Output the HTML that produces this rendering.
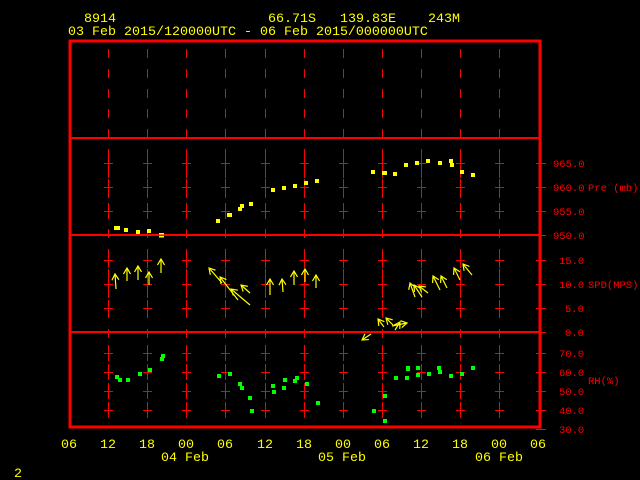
<!DOCTYPE html>
<html><head><meta charset="utf-8"><style>
html,body{margin:0;padding:0;background:#000;width:640px;height:480px;overflow:hidden}
svg{display:block}
text{font-family:"Liberation Mono",monospace}
</style></head><body>
<svg width="640" height="480" viewBox="0 0 640 480" xmlns="http://www.w3.org/2000/svg">
<defs>
<marker id="ah" markerWidth="8" markerHeight="8" refX="7" refY="4" orient="auto" markerUnits="userSpaceOnUse">
<path d="M1,0.5 L7,4 L1,7.5" fill="none" stroke="#ffff00" stroke-width="1.2"/>
</marker>
</defs>
<g fill="#ffff00" font-size="13.33">
<text x="84" y="22">8914</text>
<text x="268" y="22" xml:space="preserve">66.71S   139.83E    243M</text>
<text x="68" y="35">03 Feb 2015/120000UTC - 06 Feb 2015/000000UTC</text>
</g>
<g shape-rendering="crispEdges">
<rect x="70" y="41" width="470" height="386" fill="none" stroke="#ff0000" stroke-width="3"/>
<g stroke="#ff0000" stroke-width="2">
<line x1="71" y1="138" x2="539" y2="138"/>
<line x1="71" y1="235" x2="539" y2="235"/>
<line x1="71" y1="332" x2="539" y2="332"/>
</g>
<g stroke="#ff0000" stroke-width="1" stroke-dasharray="9,11">
<line x1="108.5" y1="49" x2="108.5" y2="426"/>
<line x1="147.5" y1="49" x2="147.5" y2="426"/>
<line x1="186.5" y1="49" x2="186.5" y2="426"/>
<line x1="225.5" y1="49" x2="225.5" y2="426"/>
<line x1="265.5" y1="49" x2="265.5" y2="426"/>
<line x1="304.5" y1="49" x2="304.5" y2="426"/>
<line x1="343.5" y1="49" x2="343.5" y2="426"/>
<line x1="382.5" y1="49" x2="382.5" y2="426"/>
<line x1="421.5" y1="49" x2="421.5" y2="426"/>
<line x1="460.5" y1="49" x2="460.5" y2="426"/>
<line x1="499.5" y1="49" x2="499.5" y2="426"/>
</g>
<g id="cr" stroke="#ff0000" stroke-width="1">
<path d="M104,163.5h9M104,187.5h9M104,211.5h9M104,260.5h9M104,284.5h9M104,308.5h9M104,353.5h9M104,372.5h9M104,391.5h9M104,410.5h9M108.5,155v16M108.5,179v16M108.5,203v16M108.5,252v16M108.5,276v16M108.5,300v16M108.5,345v16M108.5,364v16M108.5,383v16M108.5,402v16"/>
</g>
<use href="#cr" x="39"/><use href="#cr" x="78"/><use href="#cr" x="117"/><use href="#cr" x="157"/><use href="#cr" x="196"/><use href="#cr" x="235"/><use href="#cr" x="274"/><use href="#cr" x="313"/><use href="#cr" x="352"/><use href="#cr" x="391"/>
<g stroke="#ff0000" stroke-width="1">
<path d="M536,163.5h10M536,187.5h10M536,211.5h10M536,235.5h10M536,260.5h10M536,284.5h10M536,308.5h10M536,332.5h10M536,353.5h10M536,372.5h10M536,391.5h10M536,410.5h10M536,429.5h10"/>
</g>
</g>
<g fill="#ff0000" font-size="10.5">
<text x="553" y="167">965.0</text>
<text x="553" y="191">960.0</text><text x="588" y="191">Pre (mb)</text>
<text x="553" y="215">955.0</text>
<text x="553" y="239">950.0</text>
<text x="559" y="264">15.0</text>
<text x="559" y="288">10.0</text><text x="588" y="288">SPD(MPS)</text>
<text x="565" y="312">5.0</text>
<text x="565" y="336">0.0</text>
<text x="559" y="357">70.0</text>
<text x="559" y="376">60.0</text><text x="588" y="384">RH(%)</text>
<text x="559" y="395">50.0</text>
<text x="559" y="414">40.0</text>
<text x="559" y="433">30.0</text>
</g>
<g fill="#ffff00" font-size="13.33">
<text x="61" y="448">06</text><text x="100" y="448">12</text><text x="139" y="448">18</text><text x="178" y="448">00</text>
<text x="217" y="448">06</text><text x="257" y="448">12</text><text x="296" y="448">18</text><text x="335" y="448">00</text>
<text x="374" y="448">06</text><text x="413" y="448">12</text><text x="452" y="448">18</text><text x="491" y="448">00</text><text x="530" y="448">06</text>
<text x="161" y="461">04 Feb</text><text x="318" y="461">05 Feb</text><text x="475" y="461">06 Feb</text>
<text x="14" y="477">2</text>
</g>
<g fill="#ffff00">
<rect x="114" y="226" width="6" height="4"/><rect x="124" y="228" width="4" height="4"/><rect x="136" y="230" width="4" height="4"/><rect x="147" y="229" width="4" height="4"/>
<rect x="159" y="233" width="5" height="1.5"/><rect x="159" y="236" width="5" height="1.5"/>
<rect x="216" y="219" width="4" height="4"/><rect x="227" y="213" width="5" height="4"/><rect x="238" y="207" width="4" height="4"/><rect x="240" y="204" width="4" height="4"/><rect x="249" y="202" width="4" height="4"/>
<rect x="271" y="188" width="4" height="4"/><rect x="282" y="186" width="4" height="4"/><rect x="293" y="184" width="4" height="4"/><rect x="304" y="181" width="4" height="4"/><rect x="315" y="179" width="4" height="4"/>
<rect x="371" y="170" width="4" height="4"/><rect x="382" y="171" width="5" height="4"/><rect x="393" y="172" width="4" height="4"/><rect x="404" y="163" width="4" height="4"/><rect x="415" y="161" width="4" height="4"/><rect x="426" y="159" width="4" height="4"/><rect x="438" y="161" width="4" height="4"/><rect x="449" y="159" width="4" height="4"/><rect x="450" y="163" width="4" height="4"/><rect x="460" y="170" width="4" height="4"/><rect x="471" y="173" width="4" height="4"/>
</g>
<g fill="#00ff00">
<rect x="115" y="375" width="4" height="4"/><rect x="118" y="378" width="4" height="4"/><rect x="126" y="378" width="4" height="4"/><rect x="138" y="372" width="4" height="4"/><rect x="148" y="368" width="4" height="4"/><rect x="160" y="357" width="4" height="4"/><rect x="161" y="354" width="4" height="4"/>
<rect x="217" y="374" width="4" height="4"/><rect x="228" y="372" width="4" height="4"/><rect x="238" y="382" width="4" height="4"/><rect x="240" y="386" width="4" height="4"/><rect x="248" y="396" width="4" height="4"/><rect x="250" y="409" width="4" height="4"/>
<rect x="271" y="384" width="4" height="4"/><rect x="272" y="390" width="4" height="4"/><rect x="282" y="386" width="4" height="4"/><rect x="283" y="378" width="4" height="4"/><rect x="293" y="379" width="4" height="4"/><rect x="295" y="376" width="4" height="4"/><rect x="305" y="382" width="4" height="4"/><rect x="316" y="401" width="4" height="4"/>
<rect x="372" y="409" width="4" height="4"/><rect x="383" y="419" width="4" height="4"/><rect x="383" y="394" width="4" height="4"/><rect x="394" y="376" width="4" height="4"/><rect x="405" y="376" width="4" height="4"/><rect x="406" y="366" width="4" height="5"/><rect x="416" y="373" width="4" height="4"/><rect x="416" y="366" width="4" height="4"/><rect x="427" y="372" width="4" height="4"/><rect x="437" y="366" width="4" height="4"/><rect x="438" y="370" width="4" height="4"/><rect x="449" y="374" width="4" height="4"/><rect x="460" y="372" width="4" height="4"/><rect x="471" y="366" width="4" height="4"/>
</g>
<g stroke="#ffff00" stroke-width="1.2" marker-end="url(#ah)" fill="none">
<line x1="116" y1="289" x2="115" y2="274"/>
<line x1="127" y1="281" x2="127" y2="268"/>
<line x1="138" y1="280" x2="138" y2="266"/>
<line x1="149" y1="285" x2="149" y2="272"/>
<line x1="161" y1="273" x2="161" y2="259"/>
<line x1="222" y1="283" x2="209" y2="268"/>
<line x1="238" y1="300" x2="220" y2="277"/>
<line x1="250" y1="305" x2="231" y2="289"/>
<line x1="250" y1="293" x2="241" y2="285"/>
<line x1="270" y1="295" x2="270" y2="279"/>
<line x1="283" y1="292" x2="282" y2="279"/>
<line x1="294" y1="285" x2="294" y2="271"/>
<line x1="305" y1="282" x2="305" y2="269"/>
<line x1="316" y1="288" x2="316" y2="275"/>
<line x1="371" y1="334" x2="362" y2="340"/>
<line x1="384" y1="327" x2="378" y2="319"/>
<line x1="393" y1="325" x2="386" y2="318"/>
<line x1="395" y1="330" x2="400" y2="322"/>
<line x1="392" y1="326" x2="407" y2="323"/>
<line x1="415" y1="297" x2="410" y2="283"/>
<line x1="422" y1="297" x2="414" y2="285"/>
<line x1="428" y1="293" x2="419" y2="286"/>
<line x1="440" y1="290" x2="433" y2="276"/>
<line x1="447" y1="288" x2="441" y2="276"/>
<line x1="460" y1="280" x2="454" y2="268"/>
<line x1="472" y1="275" x2="463" y2="264"/>
</g>
</svg>
</body></html>
